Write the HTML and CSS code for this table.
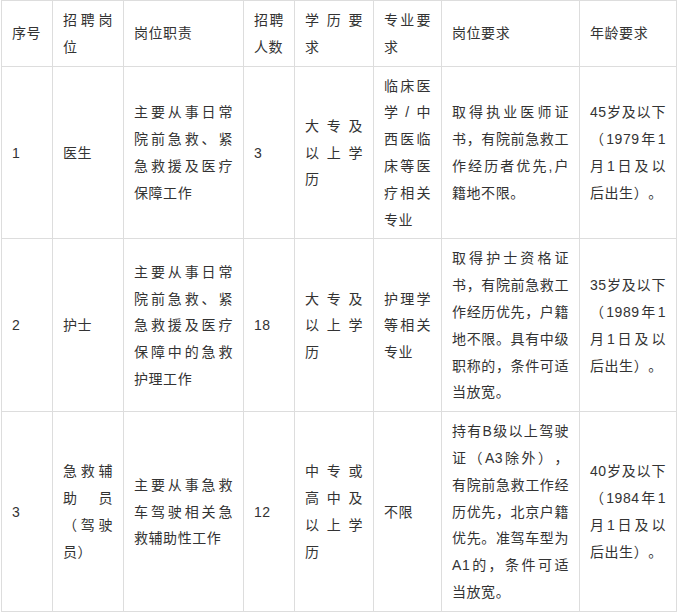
FILE: index.html
```html
<!DOCTYPE html>
<html lang="zh-CN">
<head>
<meta charset="utf-8">
<link rel="stylesheet" href="styles.css">
</head>
<body>
<table class="jobs">
  <colgroup>
    <col class="c1"><col class="c2"><col class="c3"><col class="c4"><col class="c5"><col class="c6"><col class="c7"><col class="c8">
  </colgroup>
  <tr class="head">
    <td>序号</td>
    <td>招聘岗位</td>
    <td>岗位职责</td>
    <td>招聘人数</td>
    <td>学历要求</td>
    <td>专业要求</td>
    <td>岗位要求</td>
    <td>年龄要求</td>
  </tr>
  <tr>
    <td>1</td>
    <td>医生</td>
    <td>主要从事日常院前急救、紧急救援及医疗保障工作</td>
    <td>3</td>
    <td>大专及以上学历</td>
    <td>临床医学/中西医临床等医疗相关专业</td>
    <td>取得执业医师证书，有院前急救工作经历者优先,户籍地不限。</td>
    <td>45岁及以下（1979年1月1日及以后出生）。</td>
  </tr>
  <tr>
    <td>2</td>
    <td>护士</td>
    <td>主要从事日常院前急救、紧急救援及医疗保障中的急救护理工作</td>
    <td>18</td>
    <td>大专及以上学历</td>
    <td>护理学等相关专业</td>
    <td>取得护士资格证书，有院前急救工作经历优先，户籍地不限。具有中级职称的，条件可适当放宽。</td>
    <td>35岁及以下（1989年1月1日及以后出生）。</td>
  </tr>
  <tr>
    <td>3</td>
    <td>急救辅助员（驾驶员）</td>
    <td>主要从事急救车驾驶相关急救辅助性工作</td>
    <td>12</td>
    <td>中专或高中及以上学历</td>
    <td>不限</td>
    <td>持有B级以上驾驶证（A3除外），有院前急救工作经历优先，北京户籍优先。准驾车型为A1的，条件可适当放宽。</td>
    <td>40岁及以下（1984年1月1日及以后出生）。</td>
  </tr>
</table>
</body>
</html>
```

FILE: styles.css
```css
html, body {
  margin: 0;
  padding: 0;
  background: #ffffff;
}

body {
  font-family: "Liberation Sans", "Noto Sans CJK SC", sans-serif;
  font-size: 14px;
  color: #333333;
}

.jobs {
  margin: 0 0 0 1px;
  border-collapse: collapse;
  table-layout: fixed;
  width: 676px;
}

.jobs .c1 { width: 51px; }
.jobs .c2 { width: 71px; }
.jobs .c3 { width: 120px; }
.jobs .c4 { width: 51px; }
.jobs .c5 { width: 79px; }
.jobs .c6 { width: 68px; }
.jobs .c7 { width: 138px; }
.jobs .c8 { width: 97px; }

.jobs td {
  border: 1px solid #dddddd;
  padding: 6px 10px 5px;
  vertical-align: middle;
  text-align: justify;
  line-height: 26.8px;
  letter-spacing: 0.544px;
  text-spacing-trim: space-all;
  word-wrap: break-word;
}
```
